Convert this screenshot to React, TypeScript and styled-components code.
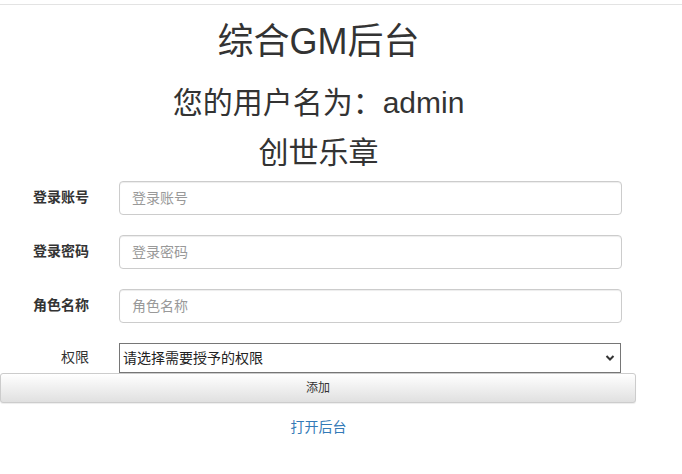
import { createGlobalStyle, styled } from "styled-components";

const GlobalStyle = createGlobalStyle`
  html, body {
    margin: 0;
    padding: 0;
    background: #fff;
  }
  body {
    font-family: "Liberation Sans", "Noto Sans CJK SC", sans-serif;
    font-size: 14px;
    line-height: 1.42857;
    color: #333;
  }
  * {
    box-sizing: border-box;
  }
`;

const fields = [
  { label: "登录账号", placeholder: "登录账号" },
  { label: "登录密码", placeholder: "登录密码" },
  { label: "角色名称", placeholder: "角色名称" },
];

function App() {
  return (
    <>
      <GlobalStyle />
      <TopRule />
      <Page>
        <Title>综合GM后台</Title>
        <SubTitle>您的用户名为：admin</SubTitle>
        <GameName>创世乐章</GameName>
        <Form onSubmit={(e) => e.preventDefault()}>
          {fields.map((field) => (
            <Row key={field.label}>
              <Label>{field.label}</Label>
              <Cell>
                <Input type="text" placeholder={field.placeholder} />
              </Cell>
            </Row>
          ))}
          <Row $tight>
            <Label $light>权限</Label>
            <Cell>
              <SelectWrap>
                <Select defaultValue="">
                  <option value="">请选择需要授予的权限</option>
                  <option value="1">超级管理员</option>
                  <option value="2">普通管理员</option>
                </Select>
                <Chevron viewBox="0 0 10 8" aria-hidden="true">
                  <path d="M1.5 2 L5 5.5 L8.5 2" fill="none" stroke="#333" strokeWidth="2" />
                </Chevron>
              </SelectWrap>
            </Cell>
          </Row>
          <AddButton type="submit">添加</AddButton>
        </Form>
        <LinkRow>
          <OpenLink href="#">打开后台</OpenLink>
        </LinkRow>
      </Page>
    </>
  );
}
export default App;

const TopRule = styled.div`
  margin-top: 4px;
  height: 1px;
  background: #e3e3e3;
`;

const Page = styled.div`
  width: 637px;
`;

const Title = styled.h1`
  margin: 17px 0 0;
  font-size: 36px;
  font-weight: 400;
  line-height: 1.1;
  text-align: center;
  color: #333;
`;

const SubTitle = styled.h2`
  margin: 24px 0 0;
  font-size: 30px;
  font-weight: 400;
  line-height: 1.1;
  text-align: center;
  color: #333;
`;

const GameName = styled(SubTitle)`
  margin-top: 17px;
`;

const Form = styled.form`
  margin-top: 12px;
`;

const Row = styled.div<{ $tight?: boolean }>`
  display: grid;
  grid-template-columns: 104px 1fr;
  align-items: center;
  margin-bottom: ${(p) => (p.$tight ? "0" : "20px")};
`;

const Label = styled.label<{ $light?: boolean }>`
  padding-right: 15px;
  text-align: right;
  font-size: 14px;
  font-weight: ${(p) => (p.$light ? 400 : 700)};
  color: #333;
`;

const Cell = styled.div`
  padding: 0 15px;
`;

const Input = styled.input`
  display: block;
  width: 100%;
  height: 34px;
  padding: 6px 12px;
  font-family: inherit;
  font-size: 14px;
  color: #555;
  background: #fff;
  border: 1px solid #ccc;
  border-radius: 4px;
  box-shadow: inset 0 1px 1px rgba(0, 0, 0, 0.075);
  outline: none;

  &::placeholder {
    color: #999;
  }
`;

const SelectWrap = styled.div`
  position: relative;
  width: 502px;
`;

const Select = styled.select`
  display: block;
  width: 100%;
  height: 30px;
  padding: 0 24px 0 3px;
  font-family: inherit;
  font-size: 14px;
  color: #222;
  background: #fff;
  border: 1px solid #767676;
  border-radius: 0;
  appearance: none;
  outline: none;
`;

const Chevron = styled.svg`
  position: absolute;
  right: 6px;
  top: 11px;
  width: 10px;
  height: 8px;
  pointer-events: none;
`;

const AddButton = styled.button`
  display: block;
  width: 636px;
  height: 30px;
  padding: 5px 10px;
  font-family: inherit;
  font-size: 12px;
  line-height: 1.5;
  color: #333;
  background-image: linear-gradient(to bottom, #fff 0, #e0e0e0 100%);
  border: 1px solid #ccc;
  border-radius: 3px;
  box-shadow: inset 0 1px 0 rgba(255, 255, 255, 0.15), 0 1px 1px rgba(0, 0, 0, 0.075);
  cursor: pointer;
`;

const LinkRow = styled.div`
  margin-top: 15px;
  text-align: center;
`;

const OpenLink = styled.a`
  font-size: 14px;
  color: #337ab7;
  text-decoration: none;

  &:hover {
    color: #23527c;
    text-decoration: underline;
  }
`;
